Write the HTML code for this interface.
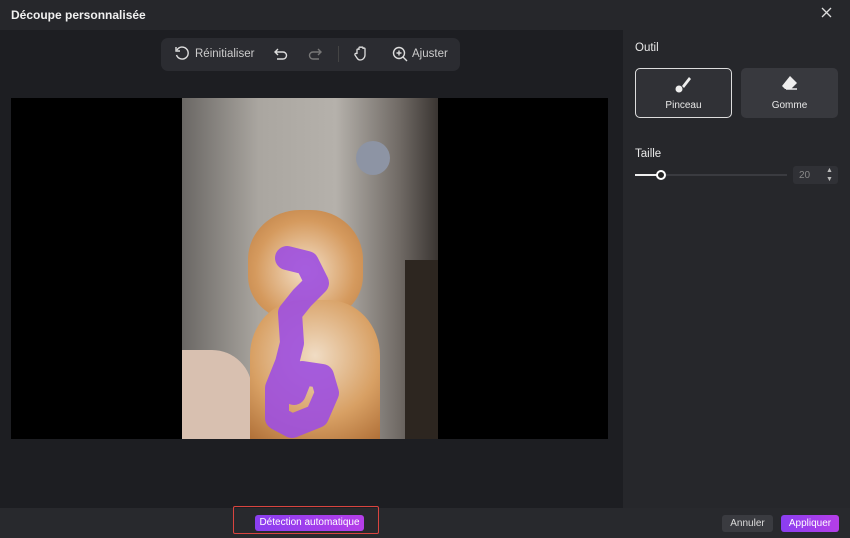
<!DOCTYPE html>
<html><head><meta charset="utf-8"><style>
*{margin:0;padding:0;box-sizing:border-box}
body{width:850px;height:538px;background:#1d1e22;font-family:"Liberation Sans",sans-serif;color:#e8e8e8;position:relative;overflow:hidden;font-size:11px}
.abs{position:absolute}
</style></head><body>
<div class="abs" style="left:0;top:0;width:850px;height:30px;background:#26272b"></div>
<div class="abs" style="left:11px;top:8px;font-size:12px;font-weight:bold;color:#f0f0f0">Découpe personnalisée</div>
<svg class="abs" style="left:821px;top:7px" width="11" height="11"><path d="M1 1l9 9M10 1l-9 9" stroke="#ddd" stroke-width="1.3"/></svg>
<div class="abs" style="left:623px;top:30px;width:227px;height:478px;background:#26272b"></div>
<div class="abs" style="left:0;top:508px;width:850px;height:30px;background:#28292d"></div>
<div class="abs" style="left:161px;top:38px;width:299px;height:33px;background:#2b2c31;border-radius:7px"></div>
<svg class="abs" style="left:174px;top:46px" width="16" height="16" viewBox="0 0 16 16"><path d="M3 4A6 6 0 1 1 2.5 9" fill="none" stroke="#ddd" stroke-width="1.4"/><path d="M2 1v4h4" fill="none" stroke="#ddd" stroke-width="1.4"/></svg>
<div class="abs" style="left:195px;top:48px;color:#ccc;font-size:11.5px">Réinitialiser</div>
<svg class="abs" style="left:273px;top:46px" width="16" height="16" viewBox="0 0 16 16"><path d="M5 3L2 6l3 3M2 6h8a3.5 3.5 0 0 1 0 7H4" fill="none" stroke="#ddd" stroke-width="1.4"/></svg>
<svg class="abs" style="left:307px;top:46px" width="16" height="16" viewBox="0 0 16 16"><path d="M11 3l3 3-3 3M14 6H6a3.5 3.5 0 0 0 0 7h6" fill="none" stroke="#777" stroke-width="1.4"/></svg>
<div class="abs" style="left:338px;top:46px;width:1px;height:16px;background:#444"></div>
<svg class="abs" style="left:353px;top:45px" width="16" height="17" viewBox="0 0 16 17"><path d="M4 9V5a1 1 0 0 1 2 0V3a1 1 0 0 1 2 0v0a1 1 0 0 1 2 0v1a1 1 0 0 1 2 0v6a5 5 0 0 1-5 5H7a4 4 0 0 1-3-2L2 10a1 1 0 0 1 2-1z" fill="none" stroke="#ddd" stroke-width="1.3"/></svg>
<svg class="abs" style="left:392px;top:46px" width="16" height="16" viewBox="0 0 16 16"><circle cx="7" cy="7" r="5.5" fill="none" stroke="#ddd" stroke-width="1.4"/><path d="M7 4.5v5M4.5 7h5M11 11l4 4" stroke="#ddd" stroke-width="1.4"/></svg>
<div class="abs" style="left:412px;top:48px;color:#ccc;font-size:11.5px">Ajuster</div>
<div class="abs" style="left:11px;top:98px;width:597px;height:341px;background:#000"></div>
<div class="abs" style="left:182px;top:98px;width:256px;height:341px;background:linear-gradient(90deg,#6a6764 0%,#aaa6a0 30%,#b5b1ab 60%,#706a65 85%,#3a3532 100%)"></div>
<div class="abs" style="left:405px;top:260px;width:33px;height:179px;background:#2d2620"></div>
<div class="abs" style="left:356px;top:141px;width:34px;height:34px;border-radius:50%;background:#8d94a4"></div>
<div class="abs" style="left:182px;top:350px;width:70px;height:89px;background:#d8c0b0;border-radius:0 40px 0 0"></div>
<div class="abs" style="left:248px;top:210px;width:115px;height:110px;border-radius:45% 45% 40% 40%;background:radial-gradient(circle at 50% 55%,#f4e0c8,#d59a5e 60%,#b87a40)"></div>
<div class="abs" style="left:250px;top:300px;width:130px;height:139px;border-radius:40% 40% 0 0;background:radial-gradient(circle at 50% 40%,#f0dcc4,#d8a064 60%,#b07038)"></div>
<svg class="abs" style="left:182px;top:98px" width="256" height="341"><path d="M105 160 L125 165 L135 185 L120 200 L108 215 L110 245 L105 265 L95 290 L95 320 L110 328 L135 318 L145 295 L140 278 L120 275 L112 295" fill="none" stroke="#9d4fe0" stroke-width="24" stroke-linejoin="round" stroke-linecap="round" opacity="0.9"/></svg>
<div class="abs" style="left:635px;top:42px;font-size:11.5px">Outil</div>
<div class="abs" style="left:635px;top:68px;width:97px;height:50px;border:1.5px solid #ddd;border-radius:5px;background:#303136"></div>
<div class="abs" style="left:741px;top:68px;width:97px;height:50px;border-radius:5px;background:#38393e"></div>
<svg class="abs" style="left:673px;top:76px" width="20" height="18" viewBox="0 0 20 18"><path d="M16 1L9 10l2 2 7-9z" fill="#eee"/><circle cx="6" cy="13" r="3.5" fill="#eee"/></svg>
<svg class="abs" style="left:780px;top:75px" width="20" height="18" viewBox="0 0 20 18"><path d="M10 1l7 7-6 6H5l-3-3z" fill="#eee"/><path d="M6 14h11" stroke="#eee" stroke-width="1.5"/></svg>
<div class="abs" style="left:635px;top:100px;width:97px;text-align:center;font-size:10px">Pinceau</div>
<div class="abs" style="left:741px;top:100px;width:97px;text-align:center;font-size:10px">Gomme</div>
<div class="abs" style="left:635px;top:148px;font-size:11.5px">Taille</div>
<div class="abs" style="left:635px;top:174px;width:152px;height:2px;background:#3a3b40"></div>
<div class="abs" style="left:635px;top:174px;width:26px;height:2px;background:#eee"></div>
<div class="abs" style="left:656px;top:170px;width:10px;height:10px;border-radius:50%;background:#222;border:2px solid #fff"></div>
<div class="abs" style="left:793px;top:166px;width:45px;height:18px;background:#303136;border-radius:3px"></div>
<div class="abs" style="left:799px;top:170px;font-size:10px;color:#888">20</div>
<div class="abs" style="left:826px;top:166px;font-size:7px;color:#bbb;line-height:9px">▲<br>▼</div>
<div class="abs" style="left:233px;top:506px;width:146px;height:28px;border:1.5px solid #d9443f;border-radius:2px"></div>
<div class="abs" style="left:255px;top:515px;width:109px;height:16px;border-radius:3px;background:linear-gradient(90deg,#8a3ef0,#b53ee8);font-size:10px;color:#fff;text-align:center;line-height:16px">Détection automatique</div>
<div class="abs" style="left:722px;top:515px;width:51px;height:17px;border-radius:3px;background:#3a3b40;font-size:10px;color:#ddd;text-align:center;line-height:17px">Annuler</div>
<div class="abs" style="left:781px;top:515px;width:58px;height:17px;border-radius:3px;background:linear-gradient(90deg,#8a3ef0,#b53ee8);font-size:10px;color:#fff;text-align:center;line-height:17px">Appliquer</div>
</body></html>
